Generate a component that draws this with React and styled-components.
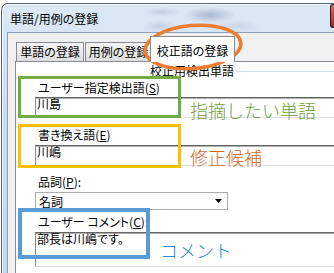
import styled, { createGlobalStyle } from 'styled-components';

const GlobalStyle = createGlobalStyle`
  html, body {
    margin: 0;
    padding: 0;
    width: 334px;
    height: 273px;
    overflow: hidden;
    background: #ffffff;
  }
  body {
    font-family: "Noto Sans CJK JP", "Noto Sans", sans-serif;
    font-size: 12px;
    color: #000;
  }
`;

const Screen = styled.div`
  position: relative;
  width: 334px;
  height: 273px;
  overflow: hidden;
`;

// Aero glass window frame
const Window = styled.div`
  display: flex;
  flex-direction: column;
  width: 340px;
  height: 269px;
  margin: 3px 0 0 1px;
  border-top: 1px solid #56657a;
  border-left: 1px solid #56657a;
  border-top-left-radius: 7px;
  background: linear-gradient(180deg, #dce8f5 0%, #cbdcef 45%, #c3d7ec 100%);
  box-shadow: inset 1px 1px 0 rgba(255, 255, 255, 0.7);
  font-feature-settings: "palt";
`;

const TitleBar = styled.div`
  display: flex;
  align-items: center;
  height: 28px;
  padding: 0 7px 0 8px;
  font-size: 12px;
  color: #000;
  background:
    radial-gradient(ellipse 26px 8px at 208px 11px, rgba(110, 130, 158, 0.45), transparent),
    radial-gradient(ellipse 18px 5px at 160px 8px, rgba(140, 160, 185, 0.35), transparent),
    radial-gradient(ellipse 16px 6px at 158px 22px, rgba(140, 160, 185, 0.3), transparent),
    radial-gradient(ellipse 22px 6px at 236px 22px, rgba(150, 170, 195, 0.25), transparent);
`;

const CloseEdge = styled.div`
  margin-left: auto;
  align-self: stretch;
  width: 4px;
  margin-bottom: 4px;
  border: 1px solid #3e1a16;
  border-right: none;
  border-radius: 3px 0 0 3px;
  background: linear-gradient(180deg, #c9705e, #8e2b1d);
`;

const Client = styled.div`
  flex: 1;
  display: flex;
  flex-direction: column;
  margin-left: 5px;
  padding: 3px 0 0 7px;
  border-top: 1px solid #8d9eb3;
  border-left: 1px solid #8d9eb3;
  background: #f0f0f0;
`;

const TabStrip = styled.div`
  display: flex;
  align-items: flex-end;
  height: 25px;
  padding-left: 1px;
`;

const Tab = styled.div`
  box-sizing: border-box;
  width: ${p => p.$width}px;
  height: 19px;
  margin-left: ${p => p.$offset || 0}px;
  border: 1px solid #898c95;
  border-bottom: none;
  line-height: 17px;
  text-align: center;
  white-space: nowrap;
  overflow: hidden;
  background: linear-gradient(180deg, #f3f3f3 0%, #ebebeb 50%, #dddddd 100%);
`;

const ActiveTab = styled(Tab)`
  position: relative;
  z-index: 2;
  height: 26px;
  margin-bottom: -1px;
  padding-top: 5px;
  background: #ffffff;
`;

const Panel = styled.div`
  flex: 1;
  display: flex;
  flex-direction: column;
  padding: 2px 0 0 19px;
  border-top: 1px solid #898c95;
  border-left: 1px solid #898c95;
  background: #ffffff;
`;

const GroupHeader = styled.div`
  display: flex;
  align-items: center;
  height: 14px;
  line-height: 14px;
  margin-left: 115px;
  white-space: nowrap;
`;

const GroupLine = styled.div`
  flex: 1;
  height: 1px;
  margin-left: 2px;
  background: #d5dfe5;
`;

const Label = styled.div`
  line-height: 14px;
  height: 14px;
  margin-top: ${p => p.$gap}px;
  padding-left: 3px;
  white-space: nowrap;
`;

const Key = styled.span`
  text-decoration: underline;
`;

const TextBox = styled.div`
  box-sizing: border-box;
  height: ${p => p.$height}px;
  margin-top: ${p => p.$gap ?? 3}px;
  padding-left: 1px;
  line-height: 12px;
  border-top: 1px solid #646464;
  border-left: 1px solid #8a8a8a;
  border-bottom: 1px solid #dfe3e8;
  box-shadow: inset 0 1px 0 #b0b0b0;
  background: #ffffff;
  white-space: nowrap;
`;

const Combo = styled.div`
  box-sizing: border-box;
  display: flex;
  align-items: center;
  justify-content: space-between;
  width: 193px;
  height: 18px;
  margin-top: 3px;
  padding: 0 5px 0 3px;
  border: 1px solid #acacac;
  background: #ffffff;
`;

const Outline = styled.div`
  position: absolute;
  box-sizing: border-box;
  left: ${p => p.$x}px;
  top: ${p => p.$y}px;
  width: ${p => p.$w}px;
  height: ${p => p.$h}px;
  border: ${p => p.$stroke}px solid ${p => p.$color};
`;

const Note = styled.div`
  position: absolute;
  left: ${p => p.$x}px;
  top: ${p => p.$y}px;
  font-size: 18px;
  line-height: 18px;
  font-weight: 300;
  color: ${p => p.$color};
  white-space: nowrap;
`;

const Ring = styled.svg`
  position: absolute;
  left: 0;
  top: 0;
`;

export default function App() {
  return (
    <>
      <GlobalStyle />
      <Screen>
        <Window>
          <TitleBar>
            単語/用例の登録
            <CloseEdge />
          </TitleBar>
          <Client>
            <TabStrip>
              <Tab $width={68}>単語の登録</Tab>
              <Tab $width={67} $offset={1}>用例の登録</Tab>
              <ActiveTab $width={85} $offset={-2}>校正語の登録</ActiveTab>
            </TabStrip>
            <Panel>
              <GroupHeader>
                校正用検出単語
                <GroupLine />
              </GroupHeader>

              <Label $gap={3}>ユーザー指定検出語(<Key>S</Key>)</Label>
              <TextBox $height={21} $gap={2}>川島</TextBox>

              <Label $gap={10}>書き換え語(<Key>E</Key>)</Label>
              <TextBox $height={21}>川嶋</TextBox>

              <Label $gap={9}>品詞(<Key>P</Key>):</Label>
              <Combo>
                名詞
                <svg width="7" height="4" viewBox="0 0 7 4">
                  <path d="M0 0h7L3.5 4z" fill="#000" />
                </svg>
              </Combo>

              <Label $gap={5}>ユーザー コメント(<Key>C</Key>):</Label>
              <TextBox $height={35}>部長は川嶋です。</TextBox>
            </Panel>
          </Client>
        </Window>

        <Ring width="334" height="273" viewBox="0 0 334 273">
          <ellipse
            cx="193"
            cy="47"
            rx="48"
            ry="21.5"
            transform="rotate(-5 193 47)"
            fill="none"
            stroke="#ed7d31"
            strokeWidth="3.5"
          />
        </Ring>

        <Outline $x={18} $y={76} $w={163} $h={42} $stroke={3} $color="#70ad47" />
        <Note $x={190} $y={101} $color="#6e9e40">指摘したい単語</Note>

        <Outline $x={18} $y={124} $w={163} $h={44} $stroke={3} $color="#ffc000" />
        <Note $x={190} $y={148} $color="#d0691f">修正候補</Note>

        <Outline $x={18} $y={208} $w={132} $h={51} $stroke={4} $color="#5b9bd5" />
        <Note $x={160} $y={241} $color="#2b86d3">コメント</Note>
      </Screen>
    </>
  );
}
